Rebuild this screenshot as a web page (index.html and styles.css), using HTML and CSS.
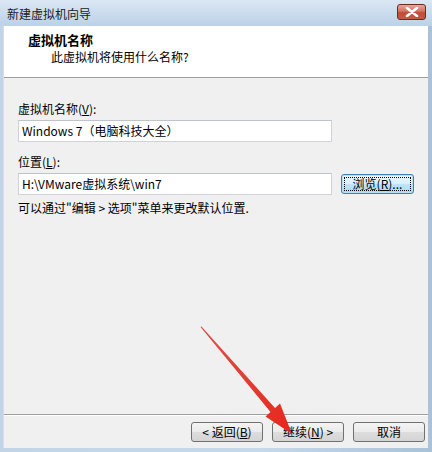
FILE: index.html
```html
<!DOCTYPE html>
<html lang="zh-CN">
<head>
<meta charset="utf-8">
<link rel="stylesheet" href="styles.css">
</head>
<body>
<div class="window">
  <div class="titlebar">
    <span class="title">新建虚拟机向导</span>
    <span class="close"><svg width="14" height="10" viewBox="0 0 14 10"><path d="M2 1 L12 9 M12 1 L2 9" stroke="#fff" stroke-width="2.6" stroke-linecap="round"/></svg></span>
  </div>
  <div class="client">
    <div class="header">
      <div class="h-title">虚拟机名称</div>
      <div class="h-sub">此虚拟机将使用什么名称?</div>
    </div>
    <div class="body">
      <div class="label">虚拟机名称(<u>V</u>):</div>
      <div class="row"><div class="input">Windows 7（电脑科技大全）</div></div>
      <div class="label label2">位置(<u>L</u>):</div>
      <div class="row">
        <div class="input">H:\VMware虚拟系统\win7</div>
        <div class="btn browse"><span class="focus">浏览(<u>R</u>)...</span></div>
      </div>
      <div class="hint">可以通过"编辑 &gt; 选项"菜单来更改默认位置.</div>
    </div>
    <div class="footer">
      <div class="btn">&lt; 返回(<u>B</u>)</div>
      <div class="btn">继续(<u>N</u>) &gt;</div>
      <div class="btn">取消</div>
    </div>
  </div>
  <svg class="arrow" width="432" height="452" viewBox="0 0 432 452">
    <defs>
      <linearGradient id="ag" x1="0" y1="0" x2="1" y2="1">
        <stop offset="0" stop-color="#d9544c"/>
        <stop offset="1" stop-color="#e8261c"/>
      </linearGradient>
    </defs>
    <polygon points="200.5,327 201.5,326.5 275,408 280,403.5 292,434 265.5,416.5 270.5,412" fill="url(#ag)"/>
  </svg>
</div>
</body>
</html>
```
FILE: styles.css
```css
html, body {
  margin: 0;
  padding: 0;
}
body {
  width: 432px;
  height: 452px;
  overflow: hidden;
  font-family: "Noto Sans CJK SC", "Liberation Sans", sans-serif;
  font-size: 12px;
  color: #000;
}
.window {
  position: relative;
  width: 432px;
  height: 452px;
  box-sizing: border-box;
  display: flex;
  flex-direction: column;
  background: linear-gradient(to right, #c2d4e8 0, #c6d8ec 60%, #a9c2d8 100%);
  padding: 0 4px 4px 3px;
}
.titlebar {
  height: 26px;
  display: flex;
  align-items: center;
  justify-content: space-between;
  margin: 0 -4px 0 -3px;
  padding: 0 6px 0 7px;
  background: linear-gradient(to bottom, #dbe7f4 0%, #cbdcee 50%, #bcd1e7 100%);
}
.title {
  font-size: 12px;
  line-height: 14px;
  padding-top: 1px;
  color: #1a1a1a;
}
.close {
  width: 29px;
  height: 16px;
  margin-top: -3px;
  box-sizing: border-box;
  border: 1px solid #6b2a22;
  border-radius: 3px;
  background: linear-gradient(to bottom, #e7a89e 0%, #d47062 45%, #c14a38 55%, #c65a45 100%);
  display: flex;
  align-items: center;
  justify-content: center;
}
.client {
  flex: 1;
  display: flex;
  flex-direction: column;
  background: #f0f0f0;
  border-left: 1px solid #d6dde6;
}
.header {
  height: 51px;
  background: #fff;
  border-bottom: 1px solid #a0a0a0;
  box-sizing: content-box;
  padding-left: 24px;
  overflow: hidden;
}
.h-title {
  font-weight: bold;
  font-size: 13px;
  line-height: 17px;
  margin-top: 5px;
}
.h-sub {
  padding-left: 23px;
  line-height: 17px;
  margin-top: 0;
}
.body {
  flex: 1;
  padding: 24px 0 0 14px;
}
.label {
  line-height: 14px;
}
.label2 {
  margin-top: 13px;
}
u {
  text-decoration: underline;
  text-underline-offset: 1px;
}
.row {
  display: flex;
  align-items: center;
  margin-top: 4px;
}
.input {
  width: 314px;
  height: 22px;
  box-sizing: border-box;
  background: #fff;
  border: 1px solid #cfd3d8;
  border-top-color: #bfc4ca;
  padding: 0 0 0 3px;
  line-height: 20px;
  font-size: 12px;
}
.btn {
  width: 72px;
  height: 20px;
  box-sizing: border-box;
  border: 1px solid #707070;
  border-radius: 3px;
  background: linear-gradient(to bottom, #f4f4f4 0%, #ebebeb 50%, #dddddd 51%, #d4d4d4 100%);
  display: flex;
  align-items: center;
  justify-content: center;
  line-height: 14px;
  font-size: 12px;
}
.browse {
  margin-left: 9px;
  width: 73px;
  border-color: #3c7fb1;
  box-shadow: inset 0 0 0 1px #b8e1f6;
  background: linear-gradient(to bottom, #eaf6fd 0%, #d9f0fc 50%, #bee6fd 51%, #a7d9f5 100%);
  padding: 2px;
}
.focus {
  flex: 1;
  align-self: stretch;
  border: 1px dotted #000;
  display: flex;
  align-items: center;
  justify-content: center;
}
.hint {
  margin-top: 6px;
  line-height: 14px;
}
.footer {
  height: 34px;
  border-top: 1px solid #a0a0a0;
  box-shadow: inset 0 1px 0 #fff;
  display: flex;
  justify-content: flex-end;
  align-items: flex-start;
  gap: 9px;
  padding: 7px 3px 0 0;
  box-sizing: border-box;
}
.arrow {
  position: absolute;
  left: 0;
  top: 0;
  pointer-events: none;
}
```
